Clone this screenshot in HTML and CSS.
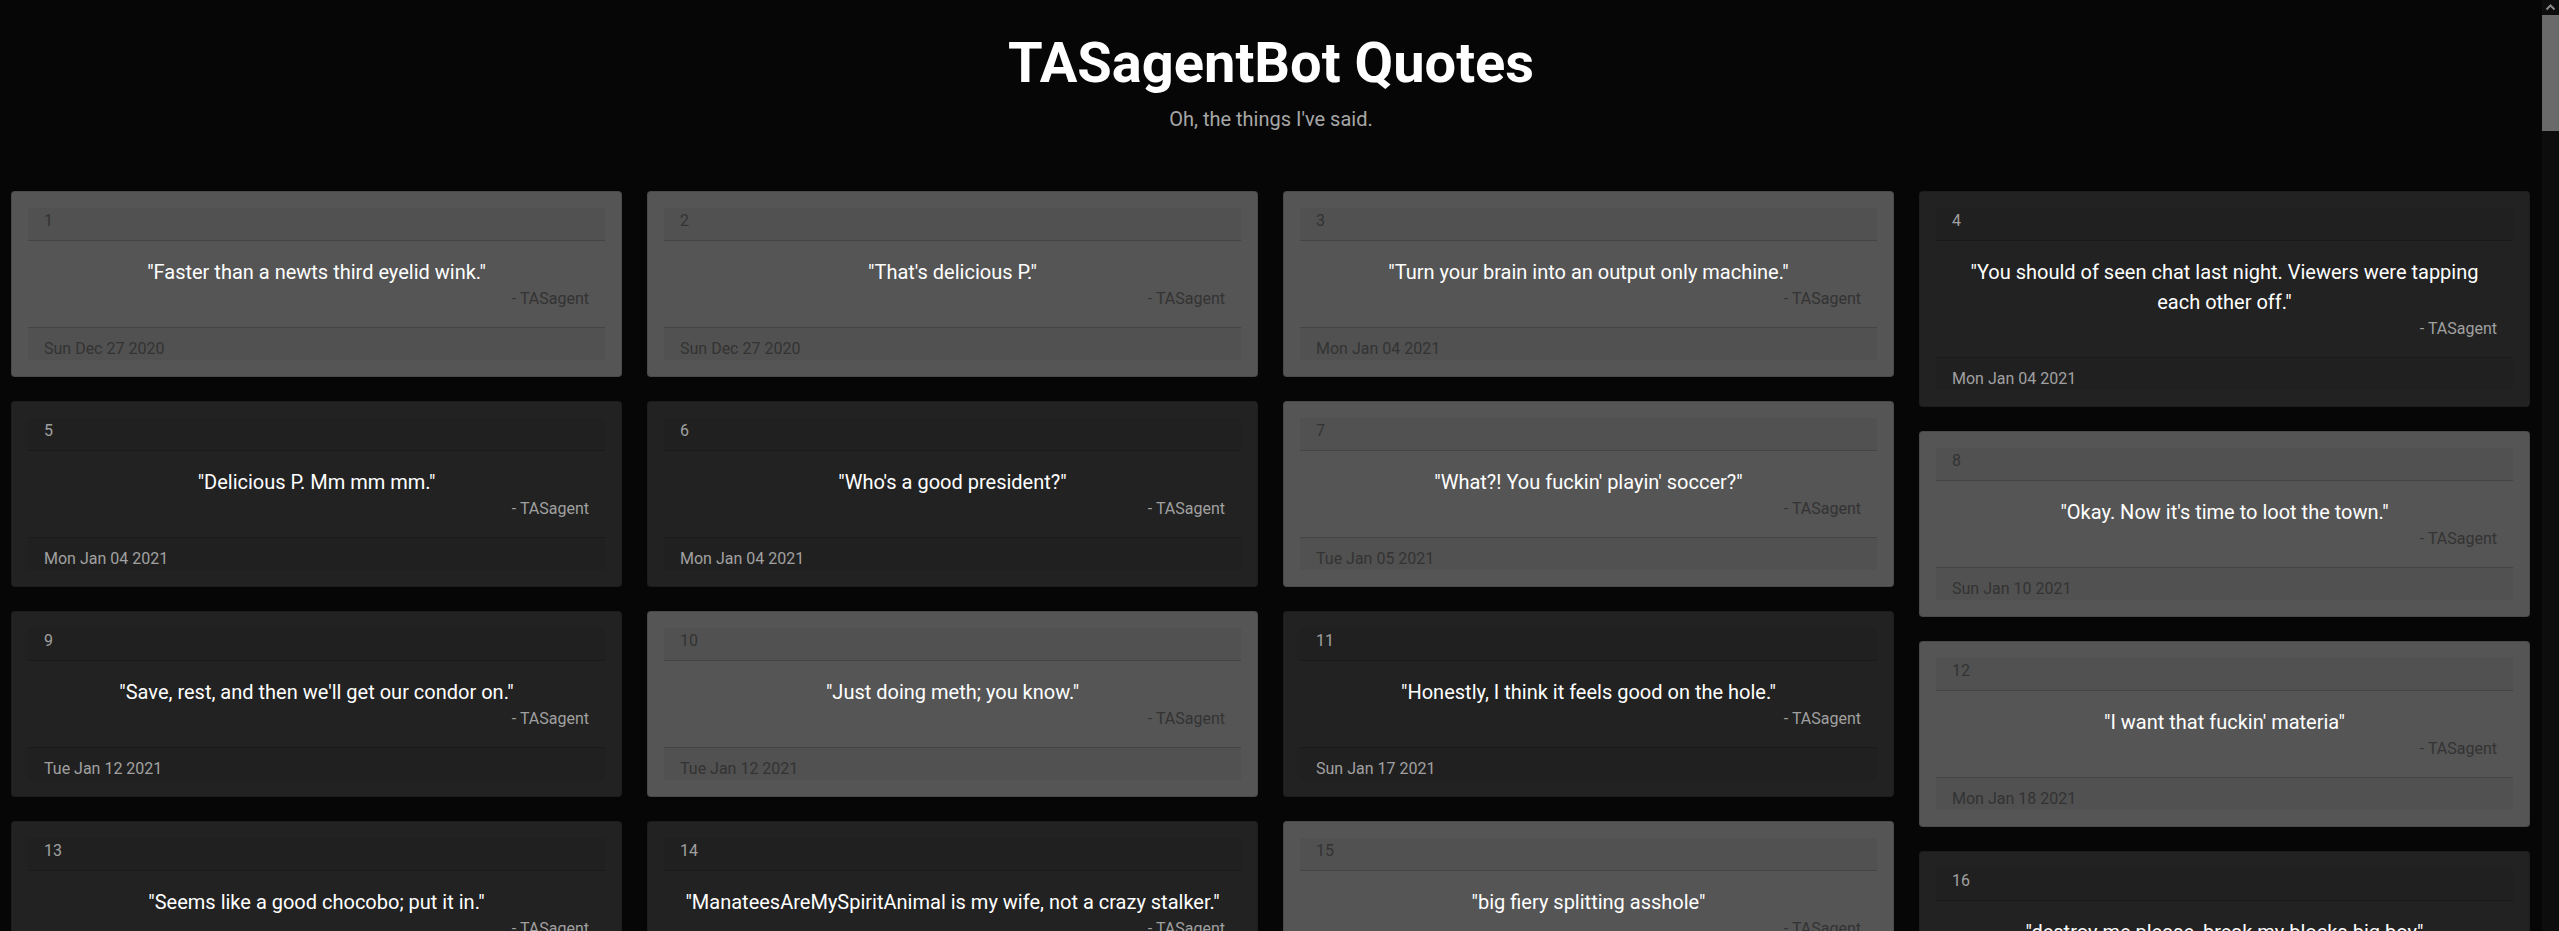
FILE: index.html
```html
<!DOCTYPE html>
<html lang="en">
<head>
<meta charset="utf-8">
<title>TASagentBot Quotes</title>
<link rel="stylesheet" href="styles.css">
</head>
<body>
<div class="page">
  <header class="hero">
    <h1 class="title">TASagentBot Quotes</h1>
    <p class="lead">Oh, the things I've said.</p>
  </header>
  <main class="board">
    <div class="col">
      <div class="card light">
        <div class="card-header">1</div>
        <div class="card-body"><p class="quote">"Faster than a newts third eyelid wink."</p><div class="attr">- TASagent</div></div>
        <div class="card-footer">Sun Dec 27 2020</div>
      </div>
      <div class="card dark">
        <div class="card-header">5</div>
        <div class="card-body"><p class="quote">"Delicious P. Mm mm mm."</p><div class="attr">- TASagent</div></div>
        <div class="card-footer">Mon Jan 04 2021</div>
      </div>
      <div class="card dark">
        <div class="card-header">9</div>
        <div class="card-body"><p class="quote">"Save, rest, and then we'll get our condor on."</p><div class="attr">- TASagent</div></div>
        <div class="card-footer">Tue Jan 12 2021</div>
      </div>
      <div class="card dark">
        <div class="card-header">13</div>
        <div class="card-body"><p class="quote">"Seems like a good chocobo; put it in."</p><div class="attr">- TASagent</div></div>
        <div class="card-footer">Mon Jan 18 2021</div>
      </div>
    </div>
    <div class="col">
      <div class="card light">
        <div class="card-header">2</div>
        <div class="card-body"><p class="quote">"That's delicious P."</p><div class="attr">- TASagent</div></div>
        <div class="card-footer">Sun Dec 27 2020</div>
      </div>
      <div class="card dark">
        <div class="card-header">6</div>
        <div class="card-body"><p class="quote">"Who's a good president?"</p><div class="attr">- TASagent</div></div>
        <div class="card-footer">Mon Jan 04 2021</div>
      </div>
      <div class="card light">
        <div class="card-header">10</div>
        <div class="card-body"><p class="quote">"Just doing meth; you know."</p><div class="attr">- TASagent</div></div>
        <div class="card-footer">Tue Jan 12 2021</div>
      </div>
      <div class="card dark">
        <div class="card-header">14</div>
        <div class="card-body"><p class="quote">"ManateesAreMySpiritAnimal is my wife, not a crazy stalker."</p><div class="attr">- TASagent</div></div>
        <div class="card-footer">Tue Jan 19 2021</div>
      </div>
    </div>
    <div class="col">
      <div class="card light">
        <div class="card-header">3</div>
        <div class="card-body"><p class="quote">"Turn your brain into an output only machine."</p><div class="attr">- TASagent</div></div>
        <div class="card-footer">Mon Jan 04 2021</div>
      </div>
      <div class="card light">
        <div class="card-header">7</div>
        <div class="card-body"><p class="quote">"What?! You fuckin' playin' soccer?"</p><div class="attr">- TASagent</div></div>
        <div class="card-footer">Tue Jan 05 2021</div>
      </div>
      <div class="card dark">
        <div class="card-header">11</div>
        <div class="card-body"><p class="quote">"Honestly, I think it feels good on the hole."</p><div class="attr">- TASagent</div></div>
        <div class="card-footer">Sun Jan 17 2021</div>
      </div>
      <div class="card light">
        <div class="card-header">15</div>
        <div class="card-body"><p class="quote">"big fiery splitting asshole"</p><div class="attr">- TASagent</div></div>
        <div class="card-footer">Tue Jan 19 2021</div>
      </div>
    </div>
    <div class="col">
      <div class="card dark">
        <div class="card-header">4</div>
        <div class="card-body"><p class="quote">"You should of seen chat last night. Viewers were tapping each other off."</p><div class="attr">- TASagent</div></div>
        <div class="card-footer">Mon Jan 04 2021</div>
      </div>
      <div class="card light">
        <div class="card-header">8</div>
        <div class="card-body"><p class="quote">"Okay. Now it's time to loot the town."</p><div class="attr">- TASagent</div></div>
        <div class="card-footer">Sun Jan 10 2021</div>
      </div>
      <div class="card light">
        <div class="card-header">12</div>
        <div class="card-body"><p class="quote">"I want that fuckin' materia"</p><div class="attr">- TASagent</div></div>
        <div class="card-footer">Mon Jan 18 2021</div>
      </div>
      <div class="card dark">
        <div class="card-header">16</div>
        <div class="card-body"><p class="quote">"destroy me please, break my blocks big boy"</p><div class="attr">- TASagent</div></div>
        <div class="card-footer">Wed Jan 20 2021</div>
      </div>
    </div>
  </main>
</div>
<div class="scrollbar" aria-hidden="true">
  <div class="sb-button">
    <svg width="17" height="15" viewBox="0 0 17 15"><polyline points="4.5,9.5 8.5,5.5 12.5,9.5" fill="none" stroke="#8a8a8a" stroke-width="2"/></svg>
  </div>
  <div class="sb-thumb"></div>
</div>
</body>
</html>
```
FILE: styles.css
```css
html, body {
  margin: 0;
  height: 100%;
  overflow: hidden;
  background: #060606;
}

body {
  font-family: Roboto, "Liberation Sans", Arial, sans-serif;
  font-size: 16px;
  line-height: 1.5;
  color: #fff;
}

.page {
  margin-right: 17px;
}

.hero {
  box-sizing: border-box;
  height: 191px;
  padding-top: 30px;
  text-align: center;
}

.title {
  margin: 0 0 7px;
  font-size: 56px;
  font-weight: 700;
  line-height: 1.2;
  color: #fff;
}

.lead {
  margin: 0;
  font-size: 20px;
  font-weight: 400;
  line-height: 30px;
  color: #a6a6a6;
}

.board {
  display: grid;
  grid-template-columns: repeat(4, 1fr);
  column-gap: 25px;
  align-items: start;
  padding: 0 12px 0 11px;
}

.col {
  display: flex;
  flex-direction: column;
  gap: 24px;
}

.card {
  border: 1px solid rgba(0, 0, 0, 0.125);
  border-radius: 4px;
  padding: 16px;
}

.card.light {
  background: #555555;
  color: #333333;
}

.card.dark {
  background: #222222;
  color: #a0a0a0;
}

.card-header {
  padding: 1px 16px 7px;
  line-height: 24px;
  background: rgba(0, 0, 0, 0.045);
  border-bottom: 1px solid rgba(0, 0, 0, 0.16);
}

.card-body {
  padding: 16px;
  text-align: center;
}

.quote {
  margin: 0;
  font-size: 20px;
  line-height: 30px;
  color: #ffffff;
}

.attr {
  font-size: 16px;
  line-height: 24px;
  text-align: right;
}

.card-footer {
  box-sizing: border-box;
  height: 33px;
  padding: 10px 16px 0;
  line-height: 21px;
  background: rgba(0, 0, 0, 0.045);
  border-top: 1px solid rgba(0, 0, 0, 0.16);
}

.scrollbar {
  position: fixed;
  top: 0;
  right: 0;
  width: 17px;
  height: 100%;
  background: #0d0d0e;
  display: flex;
  flex-direction: column;
}

.sb-button {
  height: 15px;
  display: flex;
}

.sb-thumb {
  height: 116px;
  background: #6a6a6a;
}
```
